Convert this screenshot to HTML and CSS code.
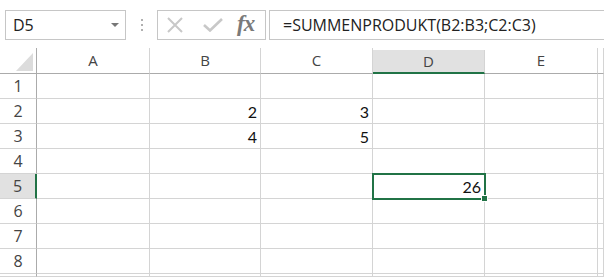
FILE: index.html
```html
<!DOCTYPE html>
<html lang="de">
<head>
    <meta charset="UTF-8">
    <title>Excel SUMMENPRODUKT</title>
    <link rel="stylesheet" href="styles.css">
</head>
<body>
    <div class="formula-bar">
        <div class="name-box">
            <span class="name-text">D5</span>
            <span class="name-arrow"></span>
        </div>
        <div class="grip">
            <span></span><span></span><span></span>
        </div>
        <div class="fx-buttons">
            <svg class="icon" width="18" height="16" viewBox="0 0 18 16">
                <path d="M2 1 L16 15 M16 1 L2 15" stroke="#c8c8c8" stroke-width="2" fill="none"/>
            </svg>
            <svg class="icon" width="20" height="14" viewBox="0 0 20 14">
                <path d="M1 7 L7 12.5 L19 1" stroke="#c8c8c8" stroke-width="2.6" fill="none"/>
            </svg>
            <span class="fx">fx</span>
        </div>
        <div class="formula-box">=SUMMENPRODUKT(B2:B3;C2:C3)</div>
    </div>

    <div class="sheet">
        <div class="corner"><span class="corner-tri"></span></div>
        <div class="col-head">A</div>
        <div class="col-head">B</div>
        <div class="col-head">C</div>
        <div class="col-head active">D</div>
        <div class="col-head">E</div>
        <div class="col-head"></div>

        <div class="row-head">1</div>
        <div class="cell"></div><div class="cell"></div><div class="cell"></div><div class="cell"></div><div class="cell"></div><div class="cell"></div>

        <div class="row-head">2</div>
        <div class="cell"></div><div class="cell">2</div><div class="cell">3</div><div class="cell"></div><div class="cell"></div><div class="cell"></div>

        <div class="row-head">3</div>
        <div class="cell"></div><div class="cell">4</div><div class="cell">5</div><div class="cell"></div><div class="cell"></div><div class="cell"></div>

        <div class="row-head">4</div>
        <div class="cell"></div><div class="cell"></div><div class="cell"></div><div class="cell"></div><div class="cell"></div><div class="cell"></div>

        <div class="row-head active">5</div>
        <div class="cell"></div><div class="cell"></div><div class="cell"></div><div class="cell selected">26<span class="handle"></span></div><div class="cell"></div><div class="cell"></div>

        <div class="row-head">6</div>
        <div class="cell"></div><div class="cell"></div><div class="cell"></div><div class="cell"></div><div class="cell"></div><div class="cell"></div>

        <div class="row-head">7</div>
        <div class="cell"></div><div class="cell"></div><div class="cell"></div><div class="cell"></div><div class="cell"></div><div class="cell"></div>

        <div class="row-head">8</div>
        <div class="cell"></div><div class="cell"></div><div class="cell"></div><div class="cell"></div><div class="cell"></div><div class="cell"></div>

        <div class="row-head"></div>
        <div class="cell"></div><div class="cell"></div><div class="cell"></div><div class="cell"></div><div class="cell"></div><div class="cell"></div>
    </div>
</body>
</html>
```

FILE: styles.css
```css
body {
    margin: 0;
    background: white;
    font-family: "Open Sans", "Liberation Sans", sans-serif;
    overflow: hidden;
    width: 604px;
    height: 277px;
}
.formula-bar {
    display: flex;
    align-items: center;
    height: 30px;
    padding: 10px 0 8px 5px;
}
.name-box {
    width: 121px;
    height: 30px;
    box-sizing: border-box;
    border: 1px solid #c6c6c6;
    display: flex;
    align-items: center;
    justify-content: space-between;
    padding: 0 6px 0 7px;
}
.name-text {
    font-size: 16px;
    color: #222;
}
.name-arrow {
    width: 0;
    height: 0;
    border-left: 4px solid transparent;
    border-right: 4px solid transparent;
    border-top: 4px solid #777;
}
.grip {
    width: 31px;
    display: flex;
    flex-direction: column;
    align-items: center;
    gap: 3px;
}
.grip span {
    width: 2px;
    height: 2px;
    background: #b0b0b0;
}
.fx-buttons {
    width: 109px;
    height: 30px;
    box-sizing: border-box;
    border: 1px solid #c6c6c6;
    display: flex;
    align-items: center;
    padding-left: 8px;
}
.icon {
    display: block;
}
.fx-buttons .icon:nth-child(2) {
    margin-left: 19px;
}
.fx {
    font-family: "Liberation Serif", serif;
    font-style: italic;
    font-weight: bold;
    font-size: 23px;
    color: #7a7a7a;
    margin-left: 14px;
    margin-top: -2px;
    letter-spacing: -1px;
}
.formula-box {
    flex: 1;
    margin-left: 3px;
    height: 30px;
    box-sizing: border-box;
    border: 1px solid #c6c6c6;
    border-right: none;
    font-size: 16px;
    color: #222;
    padding-left: 13px;
    line-height: 28px;
    white-space: nowrap;
    overflow: hidden;
}
.sheet {
    display: grid;
    grid-template-columns: 37px 113px 111px 112px 112px 113px 6px;
    grid-template-rows: 26px repeat(8, 25px) 3px;
}
.corner {
    border-right: 1px solid #ababab;
    border-bottom: 1px solid #ababab;
    position: relative;
}
.corner-tri {
    position: absolute;
    left: 16px;
    top: 5px;
    width: 0;
    height: 0;
    border-left: 17px solid transparent;
    border-bottom: 18px solid #dcdcdc;
}
.col-head {
    border-right: 1px solid #d4d4d4;
    border-bottom: 1px solid #ababab;
    text-align: center;
    font-size: 15px;
    color: #444;
    line-height: 25px;
}
.col-head.active {
    background: #e1e1e1;
    border-bottom: 2px solid #217346;
    margin-top: 2px;
    line-height: 22px;
}
.row-head {
    border-right: 1px solid #ababab;
    border-bottom: 1px solid #d4d4d4;
    text-align: center;
    font-size: 16px;
    color: #444;
    line-height: 24px;
}
.row-head.active {
    background: #e1e1e1;
    border-right: 2px solid #217346;
}
.cell {
    border-right: 1px solid #d4d4d4;
    border-bottom: 1px solid #d4d4d4;
    text-align: right;
    padding-right: 3px;
    font-family: "Lato", "Liberation Sans", sans-serif;
    font-size: 16px;
    color: #111;
    line-height: 25px;
    position: relative;
}
.cell.selected {
    outline: 2px solid #217346;
    outline-offset: -1px;
    z-index: 1;
}
.handle {
    position: absolute;
    right: -4px;
    bottom: -4px;
    width: 5px;
    height: 5px;
    background: #217346;
    border: 1px solid white;
}
```
